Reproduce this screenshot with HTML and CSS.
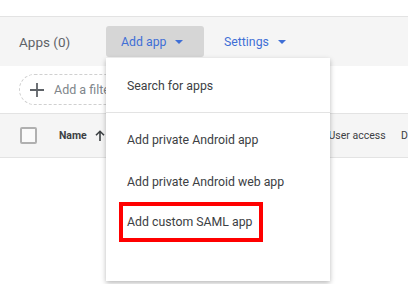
FILE: index.html
```html
<!DOCTYPE html>
<html lang="en">
<head>
    <meta charset="UTF-8">
    <title>Apps</title>
    <link rel="stylesheet" href="styles.css">
</head>
<body>

    <div class="top-space"></div>

    <div class="toolbar">
        <div class="page-title">Apps (0)</div>
        <div class="tool-btn active">Add app <span class="caret"></span></div>
        <div class="tool-btn">Settings <span class="caret"></span></div>
    </div>

    <div class="filter-row">
        <div class="filter-chip">
            <svg class="plus" width="14" height="14" viewBox="0 0 14 14">
                <path d="M7 0v14M0 7h14" stroke="#5f6368" stroke-width="1.8"/>
            </svg>
            <span>Add a filter</span>
        </div>
    </div>

    <div class="table-head">
        <div class="checkbox"></div>
        <div class="col-name">Name
            <svg class="arrow" width="10" height="11" viewBox="0 0 10 11">
                <path d="M5 11V1.5M1 5.3L5 1.3l4 4" stroke="#3c4043" stroke-width="1.6" fill="none"/>
            </svg>
        </div>
        <div class="col-access">User access</div>
        <div class="col-last">D</div>
    </div>

    <div class="menu">
        <div class="menu-item first">Search for apps</div>
        <div class="menu-list">
            <div class="menu-item">Add private Android app</div>
            <div class="menu-item">Add private Android web app</div>
            <div class="menu-item"><span class="highlight">Add custom SAML app</span></div>
        </div>
    </div>

</body>
</html>
```

FILE: styles.css
```css
*{
    margin: 0;
    padding: 0;
    box-sizing: border-box;
}

body{
    width: 408px;
    height: 284px;
    overflow: hidden;
    position: relative;
    background-color: #fff;
    font-family: Roboto, "Liberation Sans", sans-serif;
    color: #3c4043;
}

.top-space{
    height: 17px;
    border-bottom: 1px solid #e3e3e3;
}

.toolbar{
    height: 49px;
    background-color: #f5f5f5;
    display: flex;
    align-items: center;
    padding-left: 19px;
}

.page-title{
    width: 87px;
    font-size: 13.5px;
    color: #5f6368;
}

.tool-btn{
    height: 31px;
    padding: 0 15px;
    display: flex;
    align-items: center;
    font-size: 12.3px;
    color: #3f6fd6;
    border-radius: 3px;
    margin-right: 5px;
}

.tool-btn.active{
    width: 98px;
    background-color: #d6d6d6;
}

.caret{
    width: 0;
    height: 0;
    margin-left: 9px;
    border-left: 4.5px solid transparent;
    border-right: 4.5px solid transparent;
    border-top: 4.5px solid #3f6fd6;
}

.filter-row{
    height: 48px;
    display: flex;
    align-items: center;
    padding-left: 19px;
    border-bottom: 1px solid #e3e3e3;
}

.filter-chip{
    height: 31px;
    width: 140px;
    border: 1px dashed #d0d0d0;
    border-radius: 16px;
    display: flex;
    align-items: center;
    padding-left: 10px;
    font-size: 12.5px;
    color: #80868b;
}

.plus{
    margin-right: 10px;
}

.table-head{
    height: 44px;
    background-color: #f5f5f5;
    border-bottom: 1px solid #e3e3e3;
    display: flex;
    align-items: center;
    padding-left: 20px;
    font-size: 10.5px;
    color: #3c4043;
}

.checkbox{
    width: 17px;
    height: 17px;
    border: 2px solid #b0b0b0;
    border-radius: 2px;
    background-color: #fafafa;
    margin-right: 22px;
}

.col-name{
    width: 271px;
    font-weight: bold;
    display: flex;
    align-items: center;
}

.arrow{
    margin-left: 8px;
}

.col-access{
    width: 73px;
}

.menu{
    position: absolute;
    left: 106px;
    top: 58px;
    width: 224px;
    height: 223px;
    background-color: #fff;
    box-shadow: 0 2px 5px rgba(0,0,0,0.28);
}

.menu-item{
    height: 42px;
    display: flex;
    align-items: center;
    padding-left: 21px;
    font-size: 12.3px;
    color: #3c4043;
}

.menu-item.first{
    height: 55px;
    padding-top: 2px;
    border-bottom: 1px solid #e3e3e3;
}

.menu-list{
    padding-top: 6px;
}

.highlight{
    display: flex;
    align-items: center;
    width: 144px;
    height: 40px;
    margin-left: -8px;
    margin-top: -4px;
    padding-left: 4px;
    border: 4px solid #f00;
}
```
